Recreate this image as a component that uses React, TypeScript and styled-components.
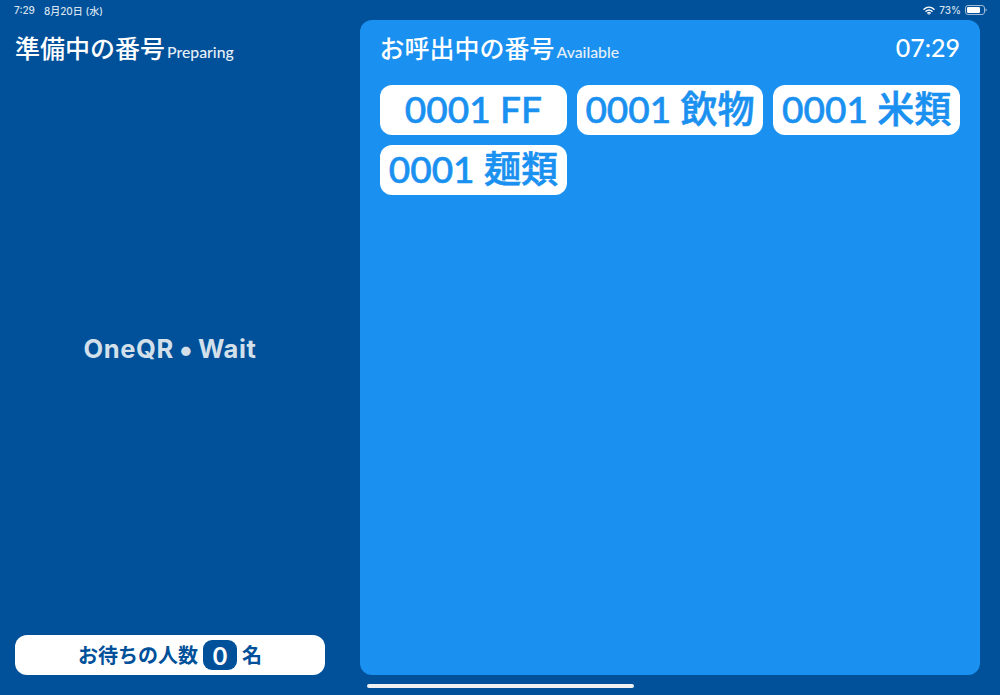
import React from "react";
import styled, { createGlobalStyle } from "styled-components";

const Global = createGlobalStyle`
  html, body { margin: 0; padding: 0; background: #00509a; }
  * { box-sizing: border-box; }
`;

const FONT = `Lato, "Noto Sans CJK JP", sans-serif`;

const Page = styled.div`
  width: 1000px;
  height: 695px;
  background: #00509a;
  display: flex;
  flex-direction: column;
  overflow: hidden;
  font-family: ${FONT};
  color: #fff;
`;

const StatusBar = styled.div`
  height: 20px;
  flex: none;
  padding: 0 13px 0 14px;
  display: flex;
  align-items: center;
  justify-content: space-between;
  font-family: Inter, "Noto Sans CJK JP", sans-serif;
  font-size: 10px;
  font-weight: 500;
  color: #d5e2ee;
`;

const StatusGroup = styled.div`
  display: flex;
  align-items: center;
  gap: 4px;
`;

const DateText = styled.span`
  margin-left: 5px;
`;

const Main = styled.div`
  flex: 1;
  min-height: 0;
  display: flex;
  padding-right: 20px;
`;

const Side = styled.aside`
  width: 360px;
  flex: none;
  padding: 0 35px 0 15px;
  display: flex;
  flex-direction: column;
`;

const Title = styled.div`
  display: flex;
  align-items: baseline;
  gap: 2px;
  height: 20px;
  line-height: 17px;
  font-size: 25px;
  font-weight: 500;
  white-space: nowrap;
  margin-left: -0.5px;
`;

const SideTitle = styled(Title)`
  margin-top: 20px;
  margin-left: 0;
`;

const Sub = styled.span`
  font-size: 15.8px;
  font-weight: 500;
  color: #e6eff7;
`;

const Brand = styled.div`
  flex: 1;
  display: flex;
  align-items: center;
  justify-content: center;
  gap: 5px;
  padding-top: 2px;
  font-family: Inter, sans-serif;
  font-size: 25.5px;
  letter-spacing: 0.6px;
  font-weight: 700;
  color: #d3e0ea;
`;

const BrandDot = styled.span`
  font-size: 30px;
  line-height: 1;
  letter-spacing: 0;
`;

const WaitBar = styled.div`
  height: 40px;
  background: #fff;
  border-radius: 12px;
  display: flex;
  align-items: center;
  justify-content: center;
  gap: 5px;
  color: #00509a;
  font-size: 20px;
  line-height: 1;
  font-weight: 600;
`;

const Count = styled.span`
  width: 34px;
  height: 30px;
  border-radius: 9px;
  background: #00509a;
  color: #fff;
  font-size: 25px;
  font-weight: 700;
  display: flex;
  align-items: center;
  justify-content: center;
`;

const Panel = styled.section`
  flex: 1;
  background: #1a91f0;
  border-radius: 12px;
  padding: 20px;
  display: flex;
  flex-direction: column;
  gap: 25px;
`;

const PanelHead = styled.div`
  display: flex;
  align-items: center;
  justify-content: space-between;
  height: 20px;
`;

const Clock = styled.span`
  font-size: 25px;
  font-weight: 500;
  line-height: 17px;
  margin-bottom: 5px;
`;

const Tickets = styled.div`
  display: grid;
  grid-template-columns: repeat(3, 1fr);
  grid-auto-rows: 50px;
  gap: 10px;
`;

const Ticket = styled.div`
  background: #fff;
  border-radius: 12px;
  color: #1a91f0;
  font-size: 37px;
  line-height: 1;
  font-weight: 500;
  -webkit-text-stroke: 0.6px #1a91f0;
  display: flex;
  align-items: center;
  justify-content: center;
  padding-bottom: 3px;
  white-space: nowrap;
`;

const HomeArea = styled.div`
  height: 20px;
  flex: none;
  display: flex;
  justify-content: center;
  padding-top: 9px;
`;

const HomeBar = styled.div`
  width: 267px;
  height: 4px;
  border-radius: 2px;
  background: #eef0f2;
`;

const Wifi = () => (
  <svg width="12" height="9" viewBox="0 0 24 18" fill="none" stroke="#fff" strokeLinecap="round">
    <path d="M2 6.5C8 1 16 1 22 6.5" strokeWidth="3" />
    <path d="M6 10.5c3.6-3.2 8.4-3.2 12 0" strokeWidth="3" />
    <path d="M9.6 14c1.5-1.2 3.3-1.2 4.8 0" strokeWidth="3" />
    <circle cx="12" cy="16" r="1.6" fill="#fff" stroke="none" />
  </svg>
);

const Battery = () => (
  <svg width="22" height="10" viewBox="0 0 22 10">
    <rect x="0.5" y="0.5" width="19" height="9" rx="2.5" fill="none" stroke="#9fbbd6" />
    <rect x="2" y="2" width="13" height="6" rx="1.2" fill="#fff" />
    <path d="M20.5 3.5c.8.2 1.2.8 1.2 1.5s-.4 1.3-1.2 1.5z" fill="#9fbbd6" />
  </svg>
);

const tickets = ["0001 FF", "0001 飲物", "0001 米類", "0001 麺類"];

export default function App() {
  return (
    <Page>
      <Global />
      <StatusBar>
        <StatusGroup>
          <span>7:29</span>
          <DateText>8月20日 (水)</DateText>
        </StatusGroup>
        <StatusGroup>
          <Wifi />
          <span>73%</span>
          <Battery />
        </StatusGroup>
      </StatusBar>
      <Main>
        <Side>
          <SideTitle>
            準備中の番号<Sub>Preparing</Sub>
          </SideTitle>
          <Brand>
            <span>OneQR</span>
            <BrandDot>•</BrandDot>
            <span>Wait</span>
          </Brand>
          <WaitBar>
            お待ちの人数<Count>0</Count>名
          </WaitBar>
        </Side>
        <Panel>
          <PanelHead>
            <Title>
              お呼出中の番号<Sub>Available</Sub>
            </Title>
            <Clock>07:29</Clock>
          </PanelHead>
          <Tickets>
            {tickets.map((t) => (
              <Ticket key={t}>{t}</Ticket>
            ))}
          </Tickets>
        </Panel>
      </Main>
      <HomeArea>
        <HomeBar />
      </HomeArea>
    </Page>
  );
}
